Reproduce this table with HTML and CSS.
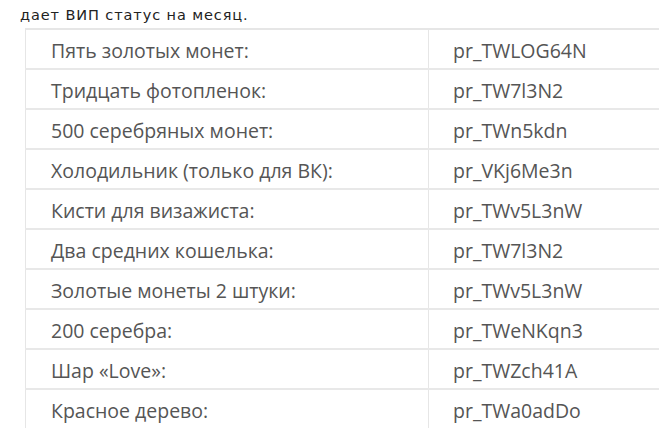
FILE: index.html
```html
<!DOCTYPE html>
<html>
<head>
<meta charset="utf-8">
<link rel="stylesheet" href="styles.css">
</head>
<body>
<p class="intro">дает ВИП статус на месяц.</p>
<table class="codes">
<tr><td class="name">Пять золотых монет:</td><td class="code">pr_TWLOG64N</td></tr>
<tr><td class="name">Тридцать фотопленок:</td><td class="code">pr_TW7l3N2</td></tr>
<tr><td class="name">500 серебряных монет:</td><td class="code">pr_TWn5kdn</td></tr>
<tr><td class="name">Холодильник (только для ВК):</td><td class="code">pr_VKj6Me3n</td></tr>
<tr><td class="name">Кисти для визажиста:</td><td class="code">pr_TWv5L3nW</td></tr>
<tr><td class="name">Два средних кошелька:</td><td class="code">pr_TW7l3N2</td></tr>
<tr><td class="name">Золотые монеты 2 штуки:</td><td class="code">pr_TWv5L3nW</td></tr>
<tr><td class="name">200 серебра:</td><td class="code">pr_TWeNKqn3</td></tr>
<tr><td class="name">Шар «Love»:</td><td class="code">pr_TWZch41A</td></tr>
<tr class="last"><td class="name">Красное дерево:</td><td class="code">pr_TWa0adDo</td></tr>
</table>
</body>
</html>
```
FILE: styles.css
```css
html, body {
  margin: 0;
  padding: 0;
  background: #fff;
  overflow: hidden;
  width: 659px;
  height: 446px;
}
body {
  font-family: "Open Sans", "Liberation Sans", sans-serif;
  color: #555;
}
.intro {
  margin: 0;
  padding: 6px 0 0 20px;
  height: 22px;
  font-family: "DejaVu Sans", Verdana, sans-serif;
  font-size: 14.5px;
  letter-spacing: 0.9px;
  line-height: 18px;
  color: #222;
}
.codes {
  margin-left: 25px;
  border-collapse: collapse;
  width: 820px;
  border-top: 2px solid #e6e6e6;
  border-left: 1px solid #e6e6e6;
}
.codes td {
  height: 35px;
  padding: 3px 0 0 25px;
  font-size: 19.5px;
  line-height: 26px;
  border-bottom: 2px solid #e8e8e8;
  vertical-align: middle;
}
.codes tr.last td {
  border-bottom: none;
}
.codes .name {
  width: 377px;
  border-right: 1px solid #e6e6e6;
}
.codes .code {
  padding-left: 24px;
}
```
